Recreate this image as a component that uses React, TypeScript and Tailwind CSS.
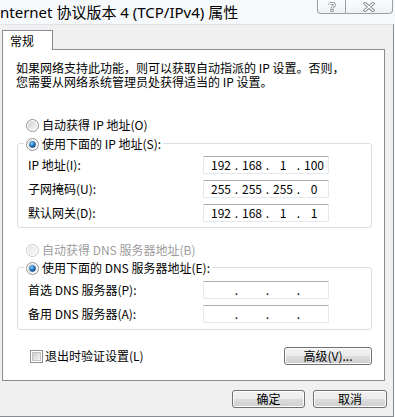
import React from 'react';

const cjk = { fontFamily: '"Noto Sans CJK SC", "Noto Sans", sans-serif' };

const Radio = ({ checked = false, disabled = false }: { checked?: boolean; disabled?: boolean }) => (
  <svg width="13" height="13" viewBox="0 0 13 13" className="shrink-0">
    <defs>
      <linearGradient id="radio-fill" x1="0" y1="0" x2="1" y2="1">
        <stop offset="0" stopColor="#cfd0d1" />
        <stop offset="1" stopColor="#fbfbfb" />
      </linearGradient>
      <linearGradient id="radio-fill-off" x1="0" y1="0" x2="1" y2="1">
        <stop offset="0" stopColor="#e4e4e4" />
        <stop offset="1" stopColor="#fafafa" />
      </linearGradient>
      <radialGradient id="radio-dot" cx="0.4" cy="0.35" r="0.65">
        <stop offset="0" stopColor="#9adcfb" />
        <stop offset="0.45" stopColor="#2d8ad6" />
        <stop offset="1" stopColor="#0c3a78" />
      </radialGradient>
    </defs>
    <circle cx="6.5" cy="6.5" r="6" fill="#ffffff" stroke={disabled ? '#c9c9c9' : '#8d8f91'} />
    <circle cx="6.5" cy="6.5" r="4.6" fill={disabled ? 'url(#radio-fill-off)' : 'url(#radio-fill)'} />
    {checked && <circle cx="6.5" cy="6.5" r="3.2" fill="url(#radio-dot)" />}
  </svg>
);

const Checkbox = () => (
  <div className="w-[13px] h-[13px] shrink-0 border border-[#8f8f8f] bg-white p-[1px]">
    <div className="w-full h-full bg-[linear-gradient(135deg,#cbcbcb,#f6f6f6)] border border-[#c4c4c4]" />
  </div>
);

const Button = ({ label, className = '' }: { label: string; className?: string }) => (
  <div
    className={`h-[18px] flex items-center justify-center rounded-[3px] border border-[#707070] bg-[linear-gradient(#f2f2f2,#ebebeb_50%,#dddddd_50%,#cfcfcf)] shadow-[inset_0_0_0_1px_#fcfcfc] text-[12px] leading-[12px] text-black ${className}`}
  >
    {label}
  </div>
);

const IpField = ({ parts }: { parts: string[] }) => (
  <div className="w-[126px] h-[18px] border border-[#e3e9ef] border-t-[#abadb3] bg-white flex items-center text-[12px] leading-[12px] text-black pl-[4px]">
    {parts.map((p, i) => (
      <React.Fragment key={i}>
        <span className="w-[26px] text-center">{p}</span>
        {i < 3 && <span className="w-[5px] text-center">.</span>}
      </React.Fragment>
    ))}
  </div>
);

const FieldRow = ({ label, parts }: { label: string; parts: string[] }) => (
  <div className="flex items-center h-[18px]">
    <div className="w-[175px] text-[12px] leading-[12px] text-black whitespace-nowrap">{label}</div>
    <IpField parts={parts} />
  </div>
);

const GroupBox = ({ label, children, className = '' }: { label: string; children: React.ReactNode; className?: string }) => (
  <div className={`relative ml-[14px] mr-[12px] border border-[#d5dfe5] rounded-[3px] ${className}`}>
    <div className="absolute -top-[8px] left-[6px] flex items-center gap-[3px] bg-white px-[2px] h-[16px]">
      <Radio checked />
      <span className="text-[12px] leading-[12px] text-black whitespace-nowrap">{label}</span>
    </div>
    {children}
  </div>
);

const CaptionButtons = () => (
  <div className="flex h-[14px] mr-[2px]">
    <div className="w-[29px] h-full border border-t-0 border-[#9aa0a8] rounded-bl-[4px] bg-[linear-gradient(#fbfcfd,#eef1f4)] flex items-center justify-center">
      <svg width="8" height="10" viewBox="0 0 8 10">
        <path d="M1.5 3 C1.5 0.8 6.5 0.8 6.5 3 C6.5 4.6 4 4.6 4 6.5" fill="none" stroke="#7c8088" strokeWidth="2.6" />
        <path d="M1.5 3 C1.5 0.8 6.5 0.8 6.5 3 C6.5 4.6 4 4.6 4 6.5" fill="none" stroke="#ffffff" strokeWidth="1.2" />
        <rect x="2.8" y="7.6" width="2.4" height="2.2" fill="#ffffff" stroke="#7c8088" strokeWidth="0.8" />
      </svg>
    </div>
    <div className="w-[47px] h-full border border-t-0 border-l-0 border-[#9aa0a8] rounded-br-[4px] bg-[linear-gradient(#fbfcfd,#eef1f4)] flex items-center justify-center">
      <svg width="12" height="10" viewBox="0 0 12 10">
        <path d="M2 1.5 L10 8.5 M10 1.5 L2 8.5" stroke="#7c8088" strokeWidth="3" strokeLinecap="square" />
        <path d="M2 1.5 L10 8.5 M10 1.5 L2 8.5" stroke="#ffffff" strokeWidth="1.4" strokeLinecap="square" />
      </svg>
    </div>
  </div>
);

export default function App() {
  return (
    <div className="w-[395px] h-[417px] overflow-hidden bg-[#f6f9fc] flex flex-col" style={cjk}>
      {/* title bar */}
      <div className="h-[24px] flex items-start justify-between shrink-0">
        <div className="pt-[3px] text-[15px] leading-[18px] text-black whitespace-nowrap" style={{ fontFamily: '"Noto Sans", "Noto Sans CJK SC", sans-serif' }}>
          nternet 协议版本 4 (TCP/IPv4) 属性
        </div>
        <CaptionButtons />
      </div>

      {/* dialog body */}
      <div className="w-[394px] flex-1 bg-[#f0f0f0] border-t border-[#dfe3e8] border-r border-b border-r-[#888c92] border-b-[#888c92] flex flex-col">
        <div className="pl-[2px] pt-[5px]">
          <div className="relative z-10 -mb-px w-[51px] h-[20px] border border-b-0 border-[#898c95] bg-white text-[12px] leading-[12px] text-black pl-[7px] pt-[4px]">
            常规
          </div>
          <div className="w-[383px] h-[332px] border border-[#898c95] bg-white flex flex-col text-[12px] leading-[13px] text-black">
            <div className="pt-[11px] pl-[13px] whitespace-nowrap leading-[14px]">
              <div>如果网络支持此功能，则可以获取自动指派的 IP 设置。否则，</div>
              <div>您需要从网络系统管理员处获得适当的 IP 设置。</div>
            </div>

            <div className="mt-[28px] ml-[23px] h-[16px] flex items-center gap-[3px]">
              <Radio />
              <span className="leading-[12px]">自动获得 IP 地址(O)</span>
            </div>

            <GroupBox label="使用下面的 IP 地址(S):" className="mt-[10px] pt-[12px] pb-[5px] pl-[10px] flex flex-col gap-[6px]">
              <FieldRow label="IP 地址(I):" parts={['192', '168', '1', '100']} />
              <FieldRow label="子网掩码(U):" parts={['255', '255', '255', '0']} />
              <FieldRow label="默认网关(D):" parts={['192', '168', '1', '1']} />
            </GroupBox>

            <div className="mt-[14px] ml-[23px] h-[16px] flex items-center gap-[3px] text-[#9d9d9d]">
              <Radio disabled />
              <span className="leading-[12px]">自动获得 DNS 服务器地址(B)</span>
            </div>

            <GroupBox label="使用下面的 DNS 服务器地址(E):" className="mt-[9px] pt-[13px] pb-[6px] pl-[10px] flex flex-col gap-[6px]">
              <FieldRow label="首选 DNS 服务器(P):" parts={['', '', '', '']} />
              <FieldRow label="备用 DNS 服务器(A):" parts={['', '', '', '']} />
            </GroupBox>

            <div className="mt-[17px] pl-[27px] pr-[12px] flex items-center justify-between">
              <div className="flex items-center gap-[2px]">
                <Checkbox />
                <span className="leading-[12px]">退出时验证设置(L)</span>
              </div>
              <Button label="高级(V)..." className="w-[88px]" />
            </div>
          </div>
        </div>

        <div className="mt-[9px] pr-[6px] flex justify-end gap-[8px]">
          <Button label="确定" className="w-[73px]" />
          <Button label="取消" className="w-[74px]" />
        </div>
      </div>
    </div>
  );
}
